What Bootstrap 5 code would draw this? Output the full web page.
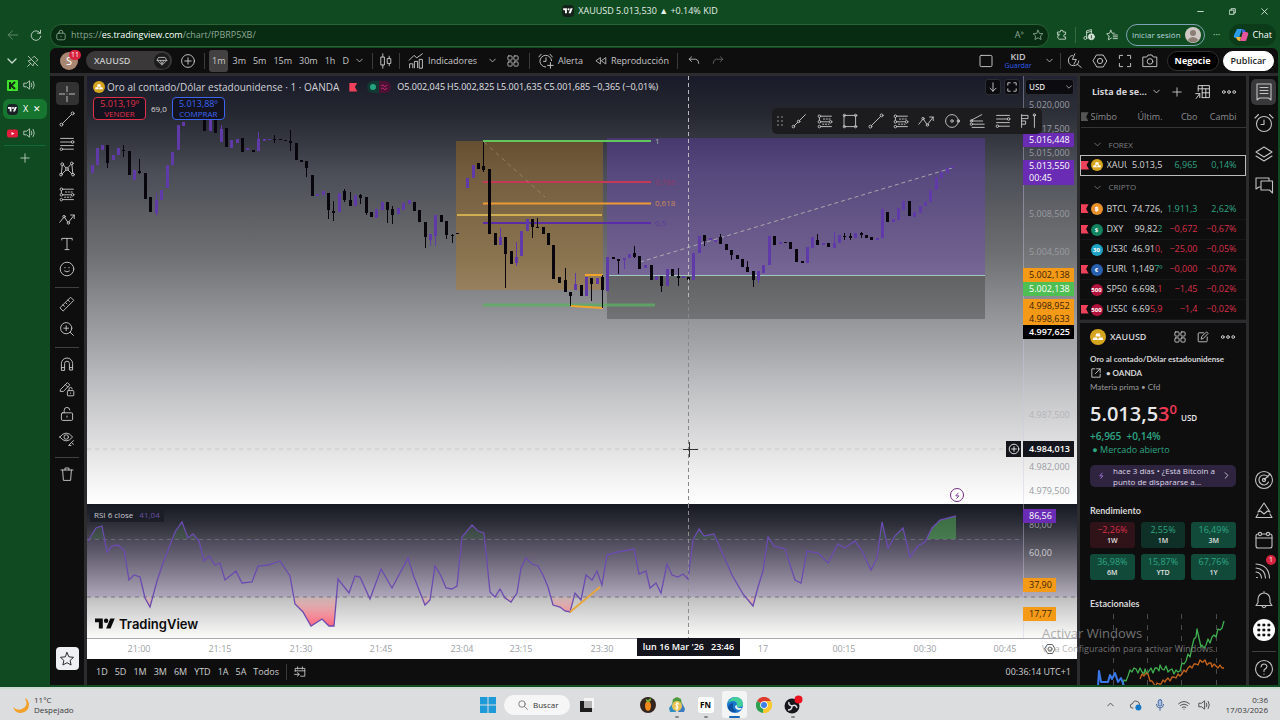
<!DOCTYPE html>
<html lang="es">
<head>
<meta charset="utf-8">
<meta name="viewport" content="width=device-width, initial-scale=1">
<title>XAUUSD 5.013,530 ▲ +0.14% KID</title>
<link href="https://cdn.jsdelivr.net/npm/bootstrap@5.3.0/dist/css/bootstrap.min.css" rel="stylesheet">
<style>
:root{--ui:"Open Sans","Noto Sans",sans-serif;--line:#2c2c2e;--up:#2ea583;--down:#d92f47}
body{font:400 9px/12px var(--ui);background:#0f4a20;color:#d6d6d6;height:100vh;min-height:560px;overflow:hidden}
button,input,select{font:inherit;color:inherit;background:none;border:0;padding:0}
a{color:inherit;text-decoration:none}
svg{display:block;flex:none}
.ic{width:16px;height:16px;fill:none;stroke:currentColor;stroke-width:1.2;stroke-linecap:round;stroke-linejoin:round}
.ic-s{width:12px;height:12px;stroke-width:1.4}
.ic-t{width:7px;height:7px;stroke-width:1.2}
.bt{display:flex;align-items:center;justify-content:center;flex:none}
.even{flex:1 1 0;min-width:0}
.w16{width:16px}.w20{width:20px}.w24{width:24px}.w26{width:26px}
/* browser */
.titlebar{height:22px;color:#e6efe8;flex:none}
.addrbar{height:26px;color:#d4e0d6;flex:none}
.address{height:23px;border:1px solid #2c6238;border-radius:12px;background:#072c12;color:#8fa895}
.signin{height:22px;border:1px solid #7fa3b4;border-radius:11px;padding:0 3px 0 5px;color:#b5d2df;font-size:8px}
.chatpill{height:22px;border-radius:11px;background:#0c3b1a;padding:0 4px;color:#fff;font-weight:500}
.tabs{width:50px;padding-top:1px;color:#c9d8cc;flex:none}
.tabrow{height:24px;padding:0 7px;gap:5px}
.tabrow.on{background:#16752f;border-radius:6px;height:20px;margin:2px 3px;padding:0 4px}
/* app */
.app{background:#2c2c2e;border-radius:6px 6px 0 0;overflow:hidden;gap:3px;margin-right:2px}
.dark{background:#0e0e0f}
.topbar{height:25px;flex:none;padding:0 4px 0 6px;font-weight:500;color:#c6c6c6}
.vr1{width:1px;height:16px;background:#3b3b3d;flex:none}
.avatar{width:18px;height:18px;border-radius:50%;background:#a98672;color:#fff;font-size:11px;position:relative}
.cnt{position:absolute;top:-2px;left:9px;background:#d8233f;color:#fff;border-radius:6px;font-size:7px;line-height:10px;padding:0 2px}
.symbox{width:86px;height:19px;border-radius:10px;background:#3a3838;padding:0 2px 0 8px}
.symbox input{width:52px;font-weight:600;outline:0}
.gem{width:16px;height:16px;border-radius:50%;background:#1b1b1b}
.tf{height:22px;border-radius:3px;padding:0 3px}
.tf.on{background:#434142}
.pillb{height:20px;border-radius:10px;padding:0 7px;font-weight:700;border:1px solid #303030;background:#000;color:#fff}
.pillb.lt{background:#fff;color:#222;border-color:#fff;font-weight:600}
.tools{width:34px;padding:6px 0 15px}
.tools .bt,.rail .bt{color:#c2c2c2}
.tools .bt{width:23px;height:23px;margin-bottom:2px;border-radius:4px}
.tools .bt.on{background:#323233}
.tools .bt.fav{background:#eef0f3;color:#222;margin:auto 0 0}
.hr1{width:24px;height:1px;background:#414143;margin:5px 0 4px;flex:none}
/* chart */
.pane{position:relative;overflow:hidden}
.pane svg.plot{position:absolute;inset:0;width:100%;height:100%}
.p-main{flex:428 1 0;background:linear-gradient(#191b2a 0,#24262f 8%,#373943 16%,#4c4e58 23%,#5c5e63 32%,#6f7072 42%,#8e8f93 54%,#a4a5a9 63%,#c2c3c5 74%,#dadadc 84%,#eee 92%,#fff)}
.p-rsi{flex:134 1 0;background:linear-gradient(#171922 0,#2d2f39 15%,#62606b 38%,#8d8994 55%,#b2adba 69%,#bfbfbf 70%,#dedede 85%,#fbfbf8)}
.lab{position:absolute;right:3px;width:51px;height:14px;margin-top:-7px;line-height:14px;padding-left:6px;white-space:nowrap;color:#9a9ca3}
.lab.s{width:33px;right:21px;font-weight:500}
.b-p{background:#6a2cb4;color:#fff;font-weight:500}.b-o{background:#f59a16;color:#39230a;font-weight:500}
.b-g{background:#4fbe53;color:#fff;font-weight:500}.b-k{background:#000;color:#fff;font-weight:600}
.b-c{background:#14151c;color:#fff;font-weight:600;height:16px;margin-top:-8px;line-height:16px}
.legend{position:absolute;left:6px;top:4px;font-size:9px;gap:2px;color:#e1e1e4;font-weight:500;white-space:nowrap}
.legend .nm{font-size:10px;font-weight:400;line-height:14px;color:#d0d1d6}
.quote{position:absolute;left:6px;top:21px;gap:5px;color:#ddd;font-size:8px}
.qb{width:53px;height:23px;border:1px solid;border-radius:4px;line-height:10px;background:#13131f;font-size:8px}
.qb b{font-size:9px;font-weight:500;display:block}
.axbtn{position:absolute;top:3px;right:57px;gap:3px}
.axbtn .bt,.cur{height:16px;background:#0c0c10;border:1px solid #2c2c33;border-radius:3px;color:#ddd}
.axbtn .bt{width:16px}
.cur{position:absolute;top:3px;right:3px;width:49px;appearance:none;padding:0 3px;font-size:8px;font-weight:600;line-height:14px}
.curchev{position:absolute;top:8px;right:5px;color:#ccc}
.favbar{position:absolute;left:69.2%;top:32px;width:270px;height:26px;background:#1c1c1f;border-radius:5px;color:#c2c2c2;z-index:3;padding:0 4px}
.fibt{position:absolute;line-height:12px;margin-top:-6px;font-size:8px}
.addp{position:absolute;right:56px;width:15px;height:16px;margin-top:-8px;background:#14151c;color:#fff}
.flash{position:absolute;width:14px;height:14px;margin:-7px;border:1px solid #6f2a80;border-radius:50%;background:#fff;color:#6f2a80}
.rsil{position:absolute;left:3px;top:3px;height:15px;padding:0 4px;background:#1c1e27;color:#c9c9d0;font-size:8px;line-height:16px}
.tvlogo{position:absolute;left:8px;bottom:5px;gap:4px;color:#0b0b0b;font:600 13px/18px Inter,var(--ui)}
.taxis{height:21px;flex:none;background:#fff;border-top:1px solid #a6a8b8;position:relative}
.tl{position:absolute;top:4px;width:40px;margin-left:-20px;text-align:center;color:#9d9fa6}
.tcur{position:absolute;top:-1px;left:55.55%;height:18px;line-height:18px;width:103px;text-align:center;background:#14151c;color:#fff;font-weight:600;white-space:pre}
.ranges{height:26px;flex:none;padding:0 6px 0 9px;gap:7px;color:#cfcfcf}
/* watch list */
.side{width:166px;font-size:9px}
.wl{width:100%;table-layout:fixed;border-collapse:collapse}
.wl th,.wl td{padding:0;height:20px;white-space:nowrap;overflow:hidden;text-align:right;font-weight:500;line-height:14px}
.wl thead th{color:#8b8b8d;font-weight:400;border-bottom:1px solid #353537}
.wl .sy{text-align:left}
.wl .grp th{height:24px;text-align:left;color:#7f7f81;font-size:8px;font-weight:400;padding-left:13px}
.wl .grp.g1 th{height:28px;padding-top:7px}
.wl tr.sel td{border-top:1px solid #bbb;border-bottom:1px solid #bbb}
.wl tr.sel td:first-child{border-left:1px solid #bbb}.wl tr.sel td:last-child{border-right:1px solid #bbb}
.wl tbody tr:not(.sel,.grp) td{border-bottom:1px solid #171719}
.up{color:var(--up)}.dn{color:var(--down)}
.coin{display:inline-block;width:12px;height:12px;border-radius:50%;font-size:6px;line-height:12px;text-align:center;color:#fff;font-weight:700;vertical-align:middle}
.flag{display:inline-block;width:8px;height:9px;background:#f0415a;clip-path:polygon(0 0,100% 0,70% 50%,100% 100%,0 100%);vertical-align:middle}
.det{padding:3px 10px 0}
.sub8{font:700 8px/14px Lato,var(--ui);white-space:nowrap}
.head9{font:700 9px/12px Lato,var(--ui);margin-top:18px}
.big{font-size:20px;line-height:22px;font-weight:600;color:#e8e8e8;white-space:nowrap;margin-top:9px}
.news{background:#2f2440;border-radius:5px;height:27px;color:#dcd6e6;font-size:8px;line-height:11px;text-align:left;padding:0 8px}
.tiles{display:grid;grid-template-columns:repeat(3,1fr);gap:6px;margin-top:5px}
.tile{height:26px;border-radius:3px;font-size:7px;line-height:11px;text-align:center;color:#e0e0e0;font-weight:600;padding-top:2px}
.tile b{display:block;font-size:9px;font-weight:500}
.t1{background:#301219}.t2{background:#0f3026}.t3{background:#124a3a}
.rail{width:29px;padding:3px 0 3px}
.rail .bt{width:25px;height:26px;margin-bottom:5px;border-radius:5px;position:relative}
.rail .ic{width:20px;height:20px;stroke-width:1.1}
.rail .btm{margin-bottom:4px}
.rail .btm:last-child{margin-bottom:0}
.rail .on{background:#39393b}
.rail .dots{width:22px;height:22px;border-radius:50%;background:#fff;color:#111}
.wm{position:absolute;left:calc(100% - 238px);bottom:64px;color:rgba(150,150,150,.75);z-index:5;white-space:nowrap;pointer-events:none;line-height:15px}
.wm div{font-size:13px}
/* taskbar */
.task{height:33px;flex:none;margin-top:2px;background:#dcdddf;color:#3b3b3b;border-top:2px solid #cdd8ce;font-size:8px;line-height:10px}
.task .bt{width:25px;height:27px;border-radius:3px;position:relative}
.task .bt.on{background:#f3f4f4}
.task .run::after{content:"";position:absolute;bottom:0;width:4px;height:2px;border-radius:1px;background:#888}
.task .on.run::after{width:11px;background:#1668b8}
.srch{width:66px;height:20px;border-radius:10px;background:#f6f6f6;padding:0 14px;gap:5px}
.srch input{width:34px;outline:0}
.srch input::placeholder{color:#333;opacity:1}
</style>
</head>
<body class="d-flex flex-column position-relative">
<svg width="0" height="0" class="position-absolute"><defs>
<symbol id="chev" viewBox="0 0 10 10"><path d="M1 3l4 4 4-4"/></symbol>
<symbol id="plus" viewBox="0 0 20 20"><path d="M10 3v14M3 10h14"/></symbol>
<symbol id="pluso" viewBox="0 0 20 20"><circle cx="10" cy="10" r="8"/><path d="M10 6v8M6 10h8"/></symbol>
<symbol id="spk" viewBox="0 0 20 20"><path d="M2 7h4l5-4v14l-5-4H2zM14 7q2 3 0 6M17 4q4 6 0 12"/></symbol>
<symbol id="grid4" viewBox="0 0 20 20"><rect x="1.500" y="1.500" width="7" height="7" rx="1.500"/><rect x="11.500" y="1.500" width="7" height="7" rx="1.500"/><rect x="1.500" y="11.500" width="7" height="7" rx="1.500"/><rect x="11.500" y="11.500" width="7" height="7" rx="1.500"/></symbol>
<symbol id="cross" viewBox="0 0 20 20"><path d="M10 0v7M10 13v7M0 10h7M13 10h7M10 10h0"/></symbol>
<symbol id="trend" viewBox="0 0 20 20"><circle cx="3" cy="17" r="1.8"/><circle cx="17" cy="3" r="1.8"/><path d="M4.400 15.600L15.600 4.400"/></symbol>
<symbol id="trend3" viewBox="0 0 20 20"><circle cx="3" cy="17" r="1.6"/><circle cx="9.500" cy="10.500" r="1.600"/><path d="M4 16l4.500-4.500M10.600 9.400L18 2"/></symbol>
<symbol id="fib" viewBox="0 0 20 20"><path d="M2 3h16M2 7.500h13M2 12h16M5 16.500h13"/><circle cx="17" cy="7.500" r="1.600"/><circle cx="3" cy="16.500" r="1.600"/></symbol>
<symbol id="patt" viewBox="0 0 20 20"><circle cx="4" cy="4" r="1.700"/><circle cx="16" cy="3" r="1.700"/><circle cx="2.500" cy="17" r="1.700"/><circle cx="10" cy="10" r="1.700"/><circle cx="17.500" cy="17" r="1.700"/><path d="M4 6L3 15M5.500 5l3 3.500M14.500 4.500L11 8.500M16.200 5l1 10M4 16l4.500-4.500M11.500 11.500L16 16"/></symbol>
<symbol id="proj" viewBox="0 0 20 20"><path d="M5 4h13M5 11h10M5 17h13M3 6v3" /><path d="M8 7.500h10M7 14h8" stroke-dasharray="1.500 2"/><circle cx="3" cy="4" r="1.600"/><circle cx="3" cy="11" r="1.600"/><circle cx="17" cy="11" r="1.600"/><circle cx="3" cy="17" r="1.600"/></symbol>
<symbol id="wave" viewBox="0 0 20 20"><path d="M1 14l4.500-5.500M7 8l4 6M12.500 13.500L19 5M14.500 5H19v4.500"/><circle cx="6.300" cy="7" r="1.500"/><circle cx="11.700" cy="15" r="1.500"/></symbol>
<symbol id="txt" viewBox="0 0 20 20"><path d="M3.500 5V3h13v2M10 3v14M7.500 17h5"/></symbol>
<symbol id="smile" viewBox="0 0 20 20"><circle cx="10" cy="10" r="8.500"/><path d="M7.500 8v.5M12.500 8v.5M7 12.500q3 2.500 6 0"/></symbol>
<symbol id="ruler" viewBox="0 0 20 20"><path d="M1.500 14.500l13-13 4 4-13 13zM5 11l2 2M8 8l2 2M11 5l2 2"/></symbol>
<symbol id="zoomi" viewBox="0 0 20 20"><circle cx="9" cy="9" r="7"/><path d="M14 14l4 4M9 6v6M6 9h6"/></symbol>
<symbol id="magnet" viewBox="0 0 20 20"><path d="M3 17.500V9.500a7 7 0 0114 0v8h-4V9.500a3 3 0 00-6 0v8zM3 14.500h4M13 14.500h4"/></symbol>
<symbol id="penlock" viewBox="0 0 20 20"><path d="M2 10.500L10.500 2l3 3L5.500 13H2zM8 4.500l3 3"/><rect x="10.500" y="12" width="8" height="6.500" rx="1"/><path d="M12.500 12v-2a2 2 0 014 0M14.500 15v.5"/></symbol>
<symbol id="lock" viewBox="0 0 20 20"><rect x="3" y="8.500" width="14" height="9.500" rx="1.500"/><path d="M6.500 8.500V5.500a3.500 3.500 0 017-.5M10 12.500v1.500"/></symbol>
<symbol id="eye" viewBox="0 0 20 20"><path d="M1 7.500q8-10 16 0-8 10-16 0z"/><circle cx="9" cy="7.500" r="2.800"/><path d="M12 18l6-6M13 18h2M16.500 15.500l1.500 1"/></symbol>
<symbol id="trash" viewBox="0 0 20 20"><path d="M2.500 5h15M4.500 5l1 13h9l1-13M7.500 5V2.500h5V5"/></symbol>
<symbol id="star" viewBox="0 0 20 20"><path d="M10 2l2.400 5.300 5.800.6-4.300 3.900 1.200 5.700L10 14.600 4.900 17.500l1.200-5.700L1.800 7.900l5.800-.6z"/></symbol>
<symbol id="candle" viewBox="0 0 20 20"><path d="M6 1v4M6 15v4M14 4v3M14 13v3"/><rect x="4" y="5" width="4" height="10"/><rect x="12" y="7" width="4" height="6"/></symbol>
<symbol id="indic" viewBox="0 0 20 20"><path d="M1.500 9l6-6 3.500 3 7-5M2 18.500v-5h4v5M8 18.500v-8h4v8M14 18.500V8h4v10.500z"/></symbol>
<symbol id="alarm" viewBox="0 0 20 20"><circle cx="10" cy="11" r="7.500"/><path d="M10 7v4.500H7M1 5l3.500-3.500M19 5l-3.500-3.500"/></symbol>
<symbol id="alarmp" viewBox="0 0 20 20"><path d="M17 9.500A7.300 7.300 0 109.500 17.500M10 6v4.500H7M1 5l3-3.500M18 5l-3-3.500M15.500 12v7M12 15.500h7"/></symbol>
<symbol id="rew" viewBox="0 0 20 20"><path d="M9 5v10l-7-5zM18 5v10l-7-5z"/></symbol>
<symbol id="undo" viewBox="0 0 20 20"><path d="M6 3L2 7l4 4M2 7h11q5 1 5 7"/></symbol>
<symbol id="redo" viewBox="0 0 20 20"><path d="M14 3l4 4-4 4M18 7H7q-5 1-5 7"/></symbol>
<symbol id="sq" viewBox="0 0 20 20"><rect x="2.500" y="3" width="15" height="14" rx="1.500"/></symbol>
<symbol id="quick" viewBox="0 0 20 20"><path d="M8 3a6.500 6.500 0 108 7M14 14l5 4M11 1L8 8h5l-3 6"/></symbol>
<symbol id="hex" viewBox="0 0 20 20"><path d="M6 2.500h8L18.500 10 14 17.500H6L1.500 10z"/><circle cx="10" cy="10" r="3.300"/></symbol>
<symbol id="full" viewBox="0 0 20 20"><path d="M3 7V3h4M13 3h4v4M17 13v4h-4M7 17H3v-4"/></symbol>
<symbol id="cam" viewBox="0 0 20 20"><path d="M1.500 5h4.500l1.500-2.500h5L14 5h4.500v12h-17z"/><circle cx="10" cy="10.500" r="3.500"/></symbol>
<symbol id="dots3" viewBox="0 0 20 20"><circle cx="3.500" cy="10" r="1.700"/><circle cx="10" cy="10" r="1.700"/><circle cx="16.500" cy="10" r="1.700"/></symbol>
<symbol id="tbl" viewBox="0 0 20 20"><path d="M4 9V2h14v15H9M4 6h14M9 2v15M13.500 6v11M9 11h9M1 12h5v5M6 12l-4.500 6"/></symbol>
<symbol id="list" viewBox="0 0 20 20"><path d="M3 2h14v16l-2.500-2H5.500L3 18zM6 5.500h8M6 8.500h8M6 11.500h8"/></symbol>
<symbol id="layers" viewBox="0 0 20 20"><path d="M2 8l8-5 8 5-8 5zM2 12l8 5 8-5"/></symbol>
<symbol id="chat" viewBox="0 0 20 20"><path d="M2 14V3h13v3M2 14l3-2h2M7 6h11.500v12l-3-3H7z"/></symbol>
<symbol id="target" viewBox="0 0 20 20"><circle cx="10" cy="10" r="8.500"/><path d="M14 7a5 5 0 10.500 5M10 10l5.500-5.500"/><circle cx="10" cy="10" r="1.600"/></symbol>
<symbol id="mount" viewBox="0 0 20 20"><path d="M10 3l6 9-2.500-1L10 14l-3.500-3L4 12zM4 14l-2 3.500h16L16 14"/></symbol>
<symbol id="cal" viewBox="0 0 20 20"><rect x="2" y="4" width="16" height="14" rx="2"/><path d="M2 8h16"/><circle cx="6" cy="4" r="1.600" fill="#0e0e0f"/><circle cx="14" cy="4" r="1.600" fill="#0e0e0f"/></symbol>
<symbol id="rss" viewBox="0 0 20 20"><path d="M2 4q13 1 13.500 14M2 8q9 1 9.500 10M2 12q5 .5 5.500 6M2.500 17.500h1"/></symbol>
<symbol id="bell" viewBox="0 0 20 20"><path d="M2 15.500h16l-2-3V9A6 6 0 004 9v3.500zM8 16q2 3.500 4 0M10 1.500V3"/></symbol>
<symbol id="help" viewBox="0 0 20 20"><circle cx="10" cy="10" r="8.500"/><path d="M7 8q.5-3 3-3t3 2.500q0 1.500-3 3.500v1.500M10 15v.3"/></symbol>
<symbol id="apps9" viewBox="0 0 20 20"><path d="M4 4h2v2H4zM9 4h2v2H9zM14 4h2v2h-2zM4 9h2v2H4zM9 9h2v2H9zM14 9h2v2h-2zM4 14h2v2H4zM9 14h2v2H9zM14 14h2v2h-2z" fill="currentColor" stroke-width=".6"/></symbol>
<symbol id="recta" viewBox="0 0 20 20"><rect x="3" y="3" width="14" height="14"/><circle cx="3" cy="3" r="1.500"/><circle cx="17" cy="3" r="1.500"/><circle cx="3" cy="17" r="1.500"/><circle cx="17" cy="17" r="1.500"/></symbol>
<symbol id="circ" viewBox="0 0 20 20"><circle cx="10" cy="10" r="8"/><circle cx="10" cy="10" r="1.600"/><circle cx="18" cy="10" r="1.600"/></symbol>
<symbol id="fan" viewBox="0 0 20 20"><path d="M3 9L16 2M3 10h14M5 14h14M4 18h15"/><circle cx="3" cy="10" r="1.500"/><circle cx="3" cy="14" r="1.500"/></symbol>
<symbol id="vprof" viewBox="0 0 20 20"><path d="M2 2v16M2 3h8v4H2M2 10h5v4H2M18 3v15"/><circle cx="18" cy="2.500" r="1.500"/></symbol>
<symbol id="edit" viewBox="0 0 20 20"><path d="M11 3H3.500Q2 3 2 4.500v12Q2 18 3.500 18h12q1.500 0 1.500-1.500V10M7 13l1-4 8-7.500 2.500 2.500L11 12z"/></symbol>
<symbol id="ext" viewBox="0 0 20 20"><path d="M8 3H3v14h14v-5M11 3h6v6M17 3l-8 8"/></symbol>
<symbol id="calgo" viewBox="0 0 20 20"><path d="M2 9V4h16v13h-7M2 8h16M6 1.500V5M14 1.500V5M1 14h7M5.500 11L9 14l-3.500 3"/></symbol>
<symbol id="bolt" viewBox="0 0 20 20"><path d="M12 3L5 11h9l-6 7" stroke-width="2.500"/></symbol>
<symbol id="tv" viewBox="0 0 36 28"><path fill="currentColor" stroke="none" d="M14 22H7V11H0V4h14zM28 22h-8l7.500-18h8z"/><circle cx="20" cy="8" r="4" fill="currentColor" stroke="none"/></symbol>
<symbol id="gold" viewBox="0 0 18 18"><circle cx="9" cy="9" r="9" fill="#d6a520" stroke="none"/><path fill="#fff" stroke="none" d="M7 5h4l1 3.500H6zM4 9.500h4l1 3H3zM10 9.500h4l1 3H9z"/></symbol>
</defs></svg>

<header class="titlebar d-flex align-items-center px-2">
  <div class="even"></div>
  <div class="d-flex align-items-center gap-1">
    <svg class="rounded-1" width="12" height="12" viewBox="-4 -5 44 38" style="background:#15211b;color:#fff"><use href="#tv" width="36" height="28"/></svg><span>XAUUSD 5.013,530 ▲ +0.14% KID</span>
  </div>
  <div class="even d-flex justify-content-end gap-3">
    <button class="bt w16" aria-label="Minimizar"><svg class="ic ic-t" viewBox="0 0 10 10"><path d="M1 5h8"/></svg></button>
    <button class="bt w16" aria-label="Restaurar"><svg class="ic ic-t" viewBox="0 0 10 10"><path d="M3 3V1h6v6H7M1 3h6v6H1z"/></svg></button>
    <button class="bt w16" aria-label="Cerrar"><svg class="ic ic-t" viewBox="0 0 10 10"><path d="M1 1l8 8M9 1L1 9"/></svg></button>
  </div>
</header>

<div class="addrbar d-flex align-items-center pe-1">
  <button class="bt w26" aria-label="Atrás"><svg class="ic ic-s" viewBox="0 0 20 20" opacity=".5"><path d="M18 10H2M9 3l-7 7 7 7"/></svg></button>
  <button class="bt w20" aria-label="Actualizar"><svg class="ic ic-s" viewBox="0 0 20 20"><path d="M17 7a8 8 0 10 1 5M17.500 2v5h-5"/></svg></button>
  <form class="address d-flex align-items-center flex-fill ms-1 px-1 gap-1">
    <svg class="ic ic-s" viewBox="0 0 20 20"><rect x="3" y="7" width="14" height="11" rx="3"/><path d="M7 7V5a3 3 0 016 0v2M10 12v1"/></svg>
    <span class="flex-fill">https://<span class="text-white">es.tradingview.com</span>/chart/fPBRP5XB/</span>
    <span class="me-1">A<sup>»</sup></span><svg class="ic ic-s"><use href="#star"/></svg>
  </form>
  <button class="bt w26" aria-label="Extensiones"><svg class="ic ic-s" viewBox="0 0 20 20"><path d="M3 5h4q0-4 3-3t2 3h4v4q-4 0-3 3t3 1v4H5l-2-2v-4q3 0 3-2T3 9z"/></svg></button>
  <i class="vr1" style="background:#35683f"></i>
  <button class="bt w26" aria-label="Multimedia"><svg class="ic ic-s" viewBox="0 0 20 20"><path d="M6 15V3l8-2v6M6 6l8-2"/><circle cx="4" cy="15" r="2.500"/><circle cx="14" cy="13" r="5" fill="currentColor"/><path d="M14 11v4" stroke="#0f4a20"/></svg></button>
  <button class="bt w20" aria-label="Favoritos"><svg class="ic ic-s" viewBox="0 0 20 20"><path d="M8 2l2 5h4M5 12l-4-4 5-1 2-5M5 12l-1 6 5-3M12 10h7M12 13h7M12 16h7"/></svg></button>
  <button class="signin d-flex align-items-center gap-1 ms-1 text-nowrap">Iniciar sesión
    <svg width="16" height="16" viewBox="0 0 16 16"><circle cx="8" cy="8" r="8" fill="#cfc8c4"/><circle cx="8" cy="6" r="3" fill="#8c7d77"/><path d="M2.500 13q5.500-6 11 0-5.500 5-11 0z" fill="#8c7d77"/></svg></button>
  <button class="bt w24" aria-label="Más">···</button>
  <button class="chatpill d-flex align-items-center gap-1">
    <svg width="16" height="16" viewBox="0 0 16 16"><path d="M4 2h5L6 11H3Q0 11 1 8z" fill="#2c9be8"/><path d="M9 2l3 1 1 3H9z" fill="#3a62e0"/><path d="M10 5h3q3 0 2 3l-2 6H7z" fill="#e5559b"/><path d="M3 10h5l-1 4q-3 0-4-4z" fill="#f5b73a"/></svg>Chat</button>
</div>

<div class="d-flex flex-fill" style="min-height:0">
  <nav class="tabs" aria-label="Pestañas">
    <div class="tabrow d-flex align-items-center justify-content-between"><svg class="ic ic-s" style="width:10px"><use href="#chev"/></svg><svg class="ic ic-s me-1" viewBox="0 0 20 20"><path d="M2 2l16 16M7 8l-5 2 8 8 2-5M9 5l3-3 6 6-3 3M6 14l-5 5"/></svg></div>
    <a href="#" class="tabrow d-flex align-items-center"><svg width="11" height="11" viewBox="0 0 11 11"><rect width="11" height="11" rx="1" fill="#41e22c"/><path d="M3 2v7M8 2L4 5.500 8 9" stroke="#0c2b0c" stroke-width="2" fill="none"/></svg><svg class="ic ic-s"><use href="#spk"/></svg></a>
    <a href="#" class="tabrow on d-flex align-items-center text-white"><svg class="rounded-1" width="11" height="11" viewBox="-4 -5 44 38" style="background:#1a2026"><use href="#tv" width="36" height="28"/></svg><span>X</span><span>✕</span></a>
    <a href="#" class="tabrow d-flex align-items-center"><svg width="11" height="11" viewBox="0 0 11 11"><rect y="1.500" width="11" height="8" rx="2" fill="#e01b3c"/><path d="M4.500 4v3l3-1.500z" fill="#fff"/></svg><svg class="ic ic-s"><use href="#spk"/></svg></a>
    <div class="border-bottom border-success mx-1 opacity-50"></div>
    <button class="tabrow bt mx-auto" aria-label="Nueva pestaña"><svg class="ic ic-s"><use href="#plus"/></svg></button>
  </nav>

  <main class="app d-flex flex-column flex-fill" style="min-width:0">
    <div class="topbar dark d-flex align-items-center">
      <button class="avatar bt ms-1">S<span class="cnt">11</span></button>
      <label class="symbox d-flex align-items-center justify-content-between ms-2 me-1"><input value="XAUUSD" aria-label="Símbolo"><span class="gem bt"><svg class="ic ic-s" viewBox="0 0 20 20"><path d="M5 4h10l3 5-8 8-8-8zM2 9h16M7 9l3 6 3-6"/></svg></span></label>
      <button class="bt w24" aria-label="Comparar"><svg class="ic"><use href="#pluso"/></svg></button>
      <i class="vr1 ms-1 me-1"></i>
      <div class="d-flex align-items-center" style="gap:1px" id="tfs"></div>
      <button class="bt w16" aria-label="Intervalos"><svg class="ic ic-t"><use href="#chev"/></svg></button>
      <i class="vr1 ms-1"></i><button class="bt w26" aria-label="Velas"><svg class="ic"><use href="#candle"/></svg></button><i class="vr1"></i>
      <button class="bt gap-1 ms-2"><svg class="ic"><use href="#indic"/></svg>Indicadores</button>
      <button class="bt w24 ms-1" aria-label="Favoritos"><svg class="ic ic-t"><use href="#chev"/></svg></button>
      <button class="bt w16" aria-label="Plantillas"><svg class="ic ic-s"><use href="#grid4"/></svg></button>
      <i class="vr1 mx-2"></i>
      <button class="bt gap-1 me-1"><svg class="ic"><use href="#alarmp"/></svg>Alerta</button>
      <button class="bt gap-1 ms-2"><svg class="ic ic-s"><use href="#rew"/></svg>Reproducción</button>
      <i class="vr1 ms-2 me-2"></i>
      <button class="bt w16" aria-label="Deshacer"><svg class="ic ic-s"><use href="#undo"/></svg></button>
      <button class="bt w16 ms-2 opacity-50" aria-label="Rehacer"><svg class="ic ic-s"><use href="#redo"/></svg></button>
      <div class="flex-fill"></div>
      <button class="bt w20 me-2" aria-label="Diseño"><svg class="ic"><use href="#sq"/></svg></button>
      <div class="bt flex-column" style="line-height:9px"><button class="fw-semibold">KID</button><a href="#" style="color:#2e5bea;font-size:7px">Guardar</a></div>
      <button class="bt w20 ms-2" aria-label="Diseños"><svg class="ic ic-t"><use href="#chev"/></svg></button>
      <i class="vr1"></i>
      <button class="bt w26" aria-label="Búsqueda rápida"><svg class="ic"><use href="#quick"/></svg></button>
      <button class="bt w26" aria-label="Configuración"><svg class="ic"><use href="#hex"/></svg></button>
      <button class="bt w24" aria-label="Pantalla completa"><svg class="ic"><use href="#full"/></svg></button>
      <button class="bt w26" aria-label="Captura"><svg class="ic"><use href="#cam"/></svg></button>
      <button class="pillb mx-1">Negocie</button><button class="pillb lt">Publicar</button>
    </div>

    <div class="d-flex flex-fill" style="gap:3px;min-height:0">
      <nav class="tools dark d-flex flex-column align-items-center" id="tools" aria-label="Dibujo"></nav>

      <section class="d-flex flex-column flex-fill position-relative" style="min-width:0">
        <div class="pane p-main" id="main">
          <svg class="plot" id="mainplot" viewBox="87 76 990 428" preserveAspectRatio="none"></svg>
          <div class="legend d-flex align-items-center">
            <svg width="12" height="12"><use href="#gold"/></svg>
            <span class="nm">Oro al contado/Dólar estadounidense · 1 · OANDA</span>
            <i class="flag mx-2"></i>
            <svg class="me-1" width="24" height="12" viewBox="0 0 24 12"><path d="M6 0h6v12H6A6 6 0 016 0z" fill="#123832"/><path d="M12 0h6a6 6 0 010 12h-6z" fill="#4b1234"/><circle cx="6" cy="6" r="3" fill="#25a582"/><path d="M14 5q2-2 3 0t3-1M14 8q2-2 3 0t3-1" stroke="#c22a74" fill="none"/></svg>
            <span>O5.002,045</span><span>H5.002,825</span><span>L5.001,635</span><span>C5.001,685</span><span>−0,365 (−0,01%)</span>
          </div>
          <div class="quote d-flex align-items-center">
            <button class="qb" style="color:#e0304a"><b>5.013,19⁰</b>VENDER</button><span>69,0</span>
            <button class="qb" style="color:#3c66f0"><b>5.013,88⁰</b>COMPRAR</button>
          </div>
          <div class="favbar d-flex align-items-center justify-content-between" id="favbar"></div>
        </div>
        <div class="pane p-rsi" id="rsi">
          <svg class="plot" id="rsiplot" viewBox="87 504 990 134" preserveAspectRatio="none"></svg>
          <div class="rsil">RSI 6 close <span class="ms-1" style="color:#6a50a8">41,04</span></div>
          <div class="tvlogo d-flex align-items-center"><svg width="20" height="16"><use href="#tv"/></svg>TradingView</div>
        </div>
        <div class="taxis" id="taxis"><div class="tcur">lun 16 Mar '26   23:46</div>
          <svg class="ic ic-s position-absolute" style="right:21px;top:4px;color:#444"><use href="#hex"/></svg></div>
        <div class="ranges dark d-flex align-items-center">
          <button>1D</button><button>5D</button><button>1M</button><button>3M</button><button>6M</button><button>YTD</button><button>1A</button><button>5A</button><button>Todos</button>
          <i class="vr1"></i><button class="bt" aria-label="Ir a fecha"><svg class="ic ic-s"><use href="#calgo"/></svg></button>
          <span class="ms-auto">00:36:14 UTC+1</span>
        </div>
      </section>

      <aside class="side d-flex flex-column overflow-hidden" style="gap:3px">
        <div class="dark">
          <div class="d-flex align-items-center ps-2 pe-1" style="height:31px">
            <button class="fw-bold ms-1 text-nowrap">Lista de se...</button>
            <svg class="ic ic-t ms-auto"><use href="#chev"/></svg>
            <button class="bt w26 ms-1" aria-label="Añadir"><svg class="ic ic-s"><use href="#plus"/></svg></button>
            <button class="bt w26" aria-label="Vista"><svg class="ic"><use href="#tbl"/></svg></button>
            <button class="bt w26" aria-label="Más"><svg class="ic"><use href="#dots3"/></svg></button>
          </div>
          <table class="wl"><colgroup><col style="width:10px"><col style="width:16px"><col style="width:20px"><col style="width:36px"><col style="width:35px"><col><col style="width:9px"></colgroup>
            <thead><tr><th><i class="flag d-block" style="background:#555"></i></th><th colspan="2" class="sy">Símbo</th><th>Últim.</th><th>Cbo</th><th>Cambi</th><th></th></tr></thead>
            <tbody id="wl"></tbody></table>
        </div>
        <div class="det dark flex-fill overflow-hidden d-flex flex-column" style="min-height:0">
          <div class="d-flex align-items-center flex-shrink-0" style="height:22px">
            <svg width="16" height="16"><use href="#gold"/></svg><b class="fw-semibold ms-1">XAUUSD</b>
            <button class="bt ms-auto" aria-label="Mosaico"><svg class="ic ic-s"><use href="#grid4"/></svg></button>
            <button class="bt w26 mx-1" aria-label="Nota"><svg class="ic ic-s"><use href="#edit"/></svg></button>
            <button class="bt w16" aria-label="Más"><svg class="ic"><use href="#dots3"/></svg></button>
          </div>
          <div class="sub8 mt-1">Oro al contado/Dólar estadounidense</div>
          <div class="sub8 d-flex align-items-center"><svg class="ic ic-s me-1"><use href="#ext"/></svg>•&nbsp;OANDA</div>
          <div class="sub8 fw-normal" style="color:#9a9a9c">Materia prima • Cfd</div>
          <div class="big">5.013,5<span style="color:#f23a55">3<sup style="font-size:13px">0</sup></span><span class="ms-1 fw-semibold" style="font-size:8px">USD</span></div>
          <div class="up fw-semibold" style="font-size:10px;line-height:14px">+6,965 &nbsp;+0,14%</div>
          <div class="up" style="line-height:14px">&nbsp;● Mercado abierto</div>
          <button class="news d-flex align-items-center gap-2 mt-2 flex-none"><svg class="ic ic-t" style="color:#a77be0"><use href="#bolt"/></svg><span class="flex-fill text-nowrap">hace 3 días • ¿Está Bitcoin a<br>punto de dispararse a...</span><svg class="ic ic-t" viewBox="0 0 10 10"><path d="M3 1l4 4-4 4"/></svg></button>
          <div class="head9">Rendimiento</div>
          <div class="tiles">
            <div class="tile t1"><b class="dn">−2,26%</b>1W</div><div class="tile t2"><b class="up">2,55%</b>1M</div><div class="tile t3"><b class="up">16,49%</b>3M</div>
            <div class="tile t3"><b class="up">36,98%</b>6M</div><div class="tile t3"><b class="up">15,87%</b>YTD</div><div class="tile t3"><b class="up">67,76%</b>1Y</div>
          </div>
          <div class="head9">Estacionales</div>
          <svg class="mt-1" id="season" width="146" height="72" viewBox="1090 616 146 72"></svg>
        </div>
      </aside>

      <nav class="rail dark d-flex flex-column align-items-center" id="rail" aria-label="Paneles"></nav>
    </div>
  </main>
</div>

<footer class="task d-flex align-items-center px-2">
  <div class="even d-flex align-items-center gap-1 ps-1">
    <svg width="18" height="18" viewBox="0 0 18 18"><path d="M13 2q4 8-3 11-5 2-9-2 2 6 8 6 8-1 8-9-1-5-4-6z" fill="#f2a12b"/></svg>
    <div>11°C<br>Despejado</div>
  </div>
  <div class="d-flex align-items-center" style="gap:4px">
    <button class="bt" aria-label="Inicio"><svg width="16" height="16" viewBox="0 0 16 16"><path fill="#1e9ad8" d="M0 0h7.500v7.500H0zM8.500 0H16v7.500H8.500zM0 8.500h7.500V16H0zM8.500 8.500H16V16H8.500z"/></svg></button>
    <label class="srch d-flex align-items-center"><svg class="ic" style="width:10px;height:10px" viewBox="0 0 20 20" stroke-width="2"><circle cx="8" cy="8" r="6.500"/><path d="M13 13l6 6"/></svg><input placeholder="Buscar" aria-label="Buscar"></label>
    <button class="bt me-4" aria-label="Vista de tareas"><svg width="16" height="16" viewBox="0 0 16 16"><path d="M5 1h10v10H5z" fill="#f6f6f6"/><path d="M1 4h4v7h8v4H1z" fill="#1c1c1c"/><path d="M5 4h8v7H5z" fill="#b4b4b4"/></svg></button>
    <button class="bt ms-2" aria-label="FL Studio"><svg width="16" height="16" viewBox="0 0 16 16"><circle cx="8" cy="8" r="8" fill="#34261f"/><ellipse cx="8" cy="9" rx="3" ry="5" fill="#f08a1c"/><path d="M8 5q-3-1-2-3l2 1 3-2q1 3-3 4z" fill="#6fb43a"/></svg></button>
    <button class="bt run" aria-label="MetaTrader"><svg width="16" height="16" viewBox="0 0 16 16"><path d="M8 0l4 2 1 6H3l1-6z" fill="#4e9a3d"/><path d="M1 15L0 11l4-5 3 9z" fill="#2f8fc0"/><path d="M9 15l4-9 3 6-1 3z" fill="#3a7bc2"/><circle cx="8" cy="9" r="5" fill="#e9c456"/><path d="M10 7q-4-1-3 1l2 2q0 2-3 1M8 5v8" stroke="#fff" fill="none"/></svg></button>
    <button class="bt run" aria-label="FundingNext"><span class="bt bg-white fw-bold text-black" style="width:16px;height:16px;font-size:8px">FN</span></button>
    <button class="bt on run" aria-label="Edge"><svg width="16" height="16" viewBox="0 0 16 16"><circle cx="8" cy="8" r="8" fill="#1b78cf"/><path d="M1 6q2-6 8-6 7 1 7 7 0 3-4 3-3 0-2-2 0-4-4-4-3 0-5 2z" fill="#43cf9b"/><path d="M6 8q-1 5 4 6-6 3-9-3 0-4 5-5z" fill="#0f4f9f"/><path d="M10 8q-1 3 3 3l2 0-2 2q-5 0-5-4z" fill="#e8f2f5"/></svg></button>
    <button class="bt" aria-label="Chrome"><svg width="16" height="16" viewBox="0 0 16 16"><path d="M8 8L1 4a8 8 0 0114 0z" fill="#df3b2f"/><path d="M8 8L1 4a8 8 0 006 12z" fill="#2ea04f"/><path d="M8 8h7.900L15 4H8zM8 8l-1 8a8 8 0 008-12z" fill="#f8c82d"/><circle cx="8" cy="8" r="3.800" fill="#fff"/><circle cx="8" cy="8" r="3" fill="#3f7fe8"/></svg></button>
    <button class="bt run" aria-label="OBS"><svg width="20" height="20" viewBox="0 0 20 20"><circle cx="9" cy="11" r="7.500" fill="#17171b"/><path d="M9 11q-4-1-3-4M9 11q4-2 5 2M9 11q0 4-4 4" stroke="#ddd" fill="none" stroke-width="1.500"/><circle cx="15.500" cy="4.500" r="4" fill="#ea1420"/></svg></button>
  </div>
  <div class="even d-flex align-items-center justify-content-end gap-2 pe-1">
    <svg class="ic ic-t me-2" viewBox="0 0 10 10"><path d="M1 7l4-4 4 4"/></svg>
    <svg class="ic ic-s" viewBox="0 0 20 20"><path d="M5 15H4a3 3 0 010-7q2-6 8-4 4 1 4 5"/><circle cx="14" cy="14" r="5" fill="#1478c8" stroke="none"/></svg>
    <svg class="ic ic-s mx-1" viewBox="0 0 20 20"><rect x="7" y="1" width="6" height="11" rx="3" fill="#a8bfe0" stroke="#345a9a"/><path d="M4 9q0 6 6 6t6-6M10 15v4" stroke="#345a9a"/></svg>
    <svg class="ic ic-s" viewBox="0 0 20 20"><path d="M1 8q9-8 18 0M4 11q6-5 12 0M7 14q3-2.500 6 0M10 17h0"/></svg>
    <svg class="ic ic-s me-1"><use href="#spk"/></svg>
    <div class="text-end ms-1">0:36<br>17/03/2026</div>
  </div>
</footer>
<div class="wm"><div>Activar Windows</div>Ve a Configuración para activar Windows.</div>

<script>
const $=id=>document.getElementById(id);
const btn=(i,c='')=>`<button class="bt ${c}" aria-label="${i}"><svg class="ic"><use href="#${i}"/></svg></button>`;
$('tfs').innerHTML=['1m','3m','5m','15m','30m','1h','D'].map((t,i)=>`<button class="tf ${i?'':'on'}">${t}</button>`).join('');
$('tools').innerHTML=btn('cross','on')+['trend','fib','patt','proj','wave','txt','smile','-','ruler','zoomi','-','magnet','penlock','lock','eye','-','trash'].map(i=>i==='-'?'<i class="hr1"></i>':btn(i)).join('')+btn('star','fav');
$('favbar').innerHTML='<svg width="8" height="12" viewBox="0 0 8 12" fill="#555"><path d="M1 1h2v2H1zM5 1h2v2H5zM1 5h2v2H1zM5 5h2v2H5zM1 9h2v2H1zM5 9h2v2H5z"/></svg>'+['trend3','proj','recta','trend','proj','wave','circ','fan','fib','vprof'].map(i=>btn(i,'w20')).join('');
$('rail').innerHTML=btn('list','on')+btn('alarm')+btn('layers')+btn('chat')+'<span class="mt-auto"></span>'+['target','mount','cal','rss','bell'].map(i=>btn(i,'btm')).join('')+'<button class="bt btm" aria-label="Aplicaciones"><span class="dots bt mb-0"><svg class="ic"><use href="#apps9"/></svg></span></button><i class="hr1 mt-1"></i>'+btn('help','btm');
$('rail').querySelectorAll('.btm')[3].insertAdjacentHTML('beforeend','<span class="cnt" style="left:15px;padding:0 3px">1</span>');

/* candles: x, body top, body bottom, colour, wick top, wick bottom */
const C=`92 165 173 p;97 148 165 p;102 145 150 p;107 145 163 k 145 168;113 155 160 p;118 148 155 p;123 150 151 k 145 157;129 151 175 k;134 170 180 p;139 171 173 k 159 174;145 173 199 k;150 197 212 k;156 200 213 p 193 216;161 190 200 p;167 165 188 p;172 152 165 p;178 125 150 p;183 122 126 p;204 118 131 k;210 120 131 p;215 120 133 k;221 129 142 p 125 142;226 128 147 k;231 140 148 p;237 139 143 p;242 138 152 k;247 148 150 p;253 150 152 k;258 139 151 p 132 151;264 139 141 p;269 139 140 p;274 139 140 k 135 143;280 139 140 k;285 140 141 k;290 141 143 k 130 151;296 143 160 k;301 160 162 k;306 161 168 k 161 177;312 175 196 k;317 194 196 p;323 191 195 p;328 193 210 k 193 219;333 211 213 k 201 221;339 193 212 p;344 191 200 k 189 202;350 200 206 k 192 206;355 195 206 p;360 195 198 k 194 204;366 197 213 k 197 215;371 212 217 k;376 209 218 p;382 202 210 p;387 202 210 k 202 223;392 209 215 k 206 224;398 208 214 p;403 203 210 p;409 200 204 p;414 202 211 k;419 210 222 k;425 222 237 k 222 248;430 234 240 p 234 246;435 215 236 p 215 246;441 215 222 k;446 221 235 k 221 239;452 235 236 k 234 243;457 233 234 k;467 178 188 p;473 165 178 p;478 163 169 k;483 166 170 k 141 172;489 169 234 k;495 233 245 k;500 237 245 p 228 245;505 237 254 k 237 288;511 251 264 k;516 257 263 p 242 266;521 231 256 p;527 219 231 p;532 219 227 k 219 238;537 227 228 k 218 228;543 227 234 k;548 233 245 k;553 245 279 k;559 277 283 k;565 280 292 k 268 292;570 292 296 k 292 306;575 284 290 p 273 290;581 285 296 k;586 277 296 p;591 278 284 k 278 301;597 278 284 p;602 277 290 k 275 308;607 257 291 p;613 257 259 k;618 259 261 k 259 274;624 258 260 p 258 269;629 254 258 p;634 253 257 k 246 258;639 256 269 k;645 265 268 p;651 265 280 k;656 276 280 p;661 276 286 k 276 292;667 269 286 p;672 269 276 k;678 276 278 k 268 286;683 276 278 p;688 277 280 k;693 253 280 p;699 236 253 p;704 235 241 k 235 246;710 238 240 p;715 240 242 p;720 237 244 k 234 244;726 244 250 k;731 250 255 k 250 260;737 255 259 k;742 259 267 k;747 267 272 k 261 272;753 271 280 k 271 287;758 271 280 p 271 283;763 265 273 p;769 236 265 p;774 236 245 k;780 242 244 p;785 242 243 k;790 242 249 k;796 249 262 k;802 261 263 k;807 247 263 p;812 237 248 p;817 240 245 k 234 245;823 243 245 p;828 243 247 k;834 243 248 p 232 248;839 235 243 p;844 236 237 k 233 240;850 236 238 k 233 240;855 233 238 p;861 233 235 k 232 238;866 235 238 k;871 237 240 k;877 238 240 p;882 209 238 p;887 212 222 k;893 219 222 p;898 208 220 p;903 201 210 p;909 201 216 k;914 212 217 p;920 206 213 p;925 202 206 p;930 190 202 p;936 177 190 p;941 172 178 p;947 168 173 p;952 166 168 p`;
const col={p:'#5f3aa8',k:'#08060c'};
const candles=C.split(';').map(r=>{const[x,a,b,c,w,v]=r.split(' ');
  return (w?`<path d="M${x} ${w}V${v}" stroke="${col[c]}" stroke-width="1" transform="translate(.5 0)"/>`:'')+`<rect x="${x-1}" y="${a}" width="3" height="${b-a}" fill="${col[c]}"/>`}).join('');
const L=(x1,y1,x2,y2,c,w=2,o='')=>`<path d="M${x1} ${y1}L${x2} ${y2}" stroke="${c}" stroke-width="${w}" fill="none" ${o}/>`;
$('mainplot').innerHTML=
 `<rect x="456" y="141" width="147" height="149" fill="#b97a14" fill-opacity=".36"/>
  <rect x="607" y="138" width="378" height="137" fill="#7040cc" fill-opacity=".33"/>
  <rect x="607" y="275" width="378" height="44" fill="#3c3c3c" fill-opacity=".4"/>
  <rect x="1023" y="76" width="54" height="428" fill="#fff" fill-opacity=".04"/>`
 +L(483,182,651,182,'#c43a56')+L(483,203.5,651,203.5,'#ee9a35')+L(457,215,602,215,'#d0ad50')+L(483,223,651,223,'#5b2ca8')
 +L(483,305,655,305,'#5cae62',3,'opacity=".8"')+L(607,275.5,985,275.5,'#a3c8bd',1)+L(585,275,603,275,'#f2a52a')+L(571,306,603,308,'#f2a52a')
 +L(484,142,545,197,'#cdb99a',1,'stroke-dasharray="4 4" opacity=".4"')+L(640,262,952,168,'#bfc3b8',1,'stroke-dasharray="4 3" opacity=".75"')
 +candles+L(483,141,651,141,'#62c55e')
 +L(87,449,1006,449,'#c8c8ca',1,'stroke-dasharray="4 4"')+L(688.5,76,688.5,300,'#b9b9bd',1,'stroke-dasharray="4 3"')
 +L(688.5,300,688.5,504,'#88888c',1,'stroke-dasharray="4 3"')+L(689.5,442,689.5,457,'#333',1)+L(683,449.500,698,449.500,'#333',1)+L(1023.5,76,1023.5,504,'#c9c6e6',1,'opacity=".4"');
const py=y=>((y-76)/428*100).toFixed(2)+'%', px=x=>((x-87)/990*100).toFixed(2)+'%', ry=y=>((y-504)/134*100).toFixed(2)+'%';
const lab=(t,y,c='',f=py,s='')=>`<div class="lab ${c}" style="top:${f(y)};${s}">${t}</div>`;
$('main').insertAdjacentHTML('beforeend',
 lab('5.020,000',105)+lab('5.017,500',129)+lab('5.016,448',140,'b-p')+lab('5.015,000',153)
 +`<div class="lab b-p" style="top:${py(167)};height:25px;line-height:12px">5.013,550<br>00:45</div>`
 +lab('5.008,500',214)+lab('5.004,500',252)+lab('5.002,138',275,'b-o')+lab('5.002,138',289,'b-g')+lab('4.998,952',306,'b-o')+lab('4.998,633',319,'b-o')+lab('4.997,625',332,'b-k')
 +lab('4.987,500',415,'',py,'color:#b4b4b8')+lab('4.984,013',449,'b-c')+lab('4.982,000',467)+lab('4.979,500',491)
 +`<button class="addp bt" style="top:${py(449)}" aria-label="Añadir"><svg class="ic ic-s"><use href="#pluso"/></svg></button>`
 +`<span class="flash bt" style="left:${px(957)};top:${py(495)}"><svg class="ic ic-t"><use href="#bolt"/></svg></span>`
 +[['1',141,'#a5b5a0'],['0,786',182,'#8d3a68'],['0,618',203,'#c98a5a'],['0,5',223,'#5b3a98']].map(([t,y,c])=>`<span class="fibt" style="left:${px(655)};top:${py(y)};color:${c}">${t}</span>`).join('')
 +'<div class="axbtn d-flex"><button class="bt" aria-label="Bajar"><svg class="ic ic-s" viewBox="0 0 20 20"><path d="M10 3v14M5 12l5 5 5-5"/></svg></button><button class="bt" aria-label="Ajustar"><svg class="ic ic-s"><use href="#full"/></svg></button></div><select class="cur" aria-label="Moneda"><option>USD</option></select><svg class="ic curchev" style="width:6px;height:6px"><use href="#chev"/></svg>');

const R='88,541 96,528 102,526 107,552 112,546 118,545 124,550 129,580 134,575 140,577 145,598 150,607 157,581 163,563 170,545 175,532 182,522 188,538 193,534 199,541 204,561 209,556 215,565 220,563 225,580 236,571 242,583 252,582 258,566 268,565 280,561 290,576 295,604 303,612 311,626 322,619 329,626 334,626 338,579 349,593 355,576 360,577 370,599 381,569 392,588 408,558 414,577 425,605 430,600 435,566 441,576 446,588 452,589 457,586 462,537 472,525 478,531 484,533 490,592 495,597 500,589 505,598 511,602 517,593 521,568 526,558 532,564 538,566 543,575 548,587 553,605 560,607 565,611 570,612 575,593 581,600 586,575 592,580 597,571 602,585 607,555 618,552 634,549 639,574 646,571 650,588 656,583 661,593 667,564 672,575 678,577 683,574 688,579 693,540 699,529 704,536 714,534 721,550 732,575 743,594 753,606 758,587 763,571 768,537 774,546 785,549 795,580 801,583 807,551 818,553 828,563 838,544 845,548 855,541 863,553 871,570 877,558 882,522 888,548 895,536 903,528 910,557 918,546 925,542 932,528 940,520 956,516';
$('rsiplot').innerHTML=`<defs><clipPath id="lo"><rect x="87" y="597" width="990" height="41"/></clipPath><clipPath id="hi"><rect x="87" y="504" width="990" height="35"/></clipPath>
 <linearGradient id="lg" gradientUnits="userSpaceOnUse" x1="0" y1="597" x2="0" y2="628"><stop stop-color="#f77" stop-opacity=".15"/><stop offset="1" stop-color="#ff5a78"/></linearGradient></defs>
 <rect x="87" y="539" width="936" height="58" fill="#7e57c2" fill-opacity=".07"/>
 <polygon points="88,597 ${R} 956,597" fill="url(#lg)" clip-path="url(#lo)"/>
 <polygon points="88,539 ${R} 956,539" fill="#4caf50" fill-opacity=".14" clip-path="url(#hi)"/>
 <polygon points="926,539 932,528 940,520 956,516 956,539" fill="#4a9a50" fill-opacity=".55"/>`
 +L(87,539.5,1023,539.5,'#85818f',1,'stroke-dasharray="4 4" opacity=".6"')+L(87,597,1077,597,'#77777b',1,'stroke-dasharray="4 4"')
 +`<polyline points="${R}" fill="none" stroke="#6b4bb0" stroke-width="1.300"/>`+L(570,612,600,587,'#e8a73c',2)
 +L(688.5,504,688.5,638,'#8d8d92',1,'stroke-dasharray="4 3"')+L(1023.5,504,1023.5,638,'#c9c6e6',1,'opacity=".4"');
$('rsi').insertAdjacentHTML('beforeend',lab('80,00',525,'s',ry)+lab('86,56',516,'s b-p',ry)+lab('60,00',553,'s',ry,'color:#d0d0d4')+lab('37,90',585,'s b-o',ry)+lab('17,77',614,'s b-o',ry));
$('taxis').insertAdjacentHTML('afterbegin',[['21:00',139],['21:15',220],['21:30',301],['21:45',381],['23:04',462],['23:15',521],['23:30',602],['17',763],['00:15',844],['00:30',925],['00:45',1005]].map(([t,x])=>`<span class="tl" style="left:${px(x)}">${t}</span>`).join(''));

const row=(fl,ic,bg,s,l,c,p,d,sel)=>`<tr class="${sel||''}"><td>${fl?'<i class="flag d-block"></i>':''}</td><td class="sy">${ic==='g'?'<svg width="12" height="12"><use href="#gold"/></svg>':`<span class="coin" style="background:${bg}">${ic}</span>`}</td><td class="sy">${s}</td><td>${l}</td><td class="${d}">${c}</td><td class="${d}">${p}</td><td></td></tr>`;
const grp=(t,c='')=>`<tr class="grp ${c}"><th colspan="7"><div class="d-flex align-items-center gap-2"><svg class="ic ic-t"><use href="#chev"/></svg>${t}</div></th></tr>`;
$('wl').innerHTML=grp('FOREX','g1')+row(1,'g','','XAUU','5.013,5','6,965','0,14%','up','sel')+grp('CRIPTO')
 +row(1,'฿','#e8912a','BTCU','74.726,','1.911,3','2,62%','up')
 +row(1,'$','#12835f','DXY','99,82<span class="up">2</span>','−0,672','−0,67%','dn')
 +row(0,'30','#1fa3c4','US30','46.91<span class="dn">0,</span>','−25,00','−0,05%','dn')
 +row(1,'€','#285fae','EURU','1,149<span class="up">7⁰</span>','−0,000','−0,07%','dn')
 +row(0,'500','#b3123c','SP50','6.698,<span class="dn">1</span>','−1,45','−0,02%','dn')
 +row(1,'500','#b3123c','US50','6.69<span class="dn">5,9</span>','−1,4','−0,02%','dn');

/* seasonal curves: anchor points with a small deterministic ripple between them */
const rip=(pts,a)=>{let o=[],k=0;for(let i=0;i<pts.length-1;i++){const[p,q]=[pts[i],pts[i+1]];for(let x=p[0];x<q[0];x+=2){k++;o.push(x+','+Math.round(p[1]+(q[1]-p[1])*(x-p[0])/(q[0]-p[0])+Math.sin(k*2.3)*a))}}return o.join(' ')};
const pl=(p,c,w=1.3)=>`<polyline points="${p}" fill="none" stroke="${c}" stroke-width="${w}" stroke-linejoin="round"/>`;
$('season').innerHTML=[1113,1147,1181,1216].map(x=>L(x+.5,616,x+.5,688,'#4a4a4c',1,'stroke-dasharray="5 6"')).join('')
 +pl(rip([[1122,688],[1132,671],[1145,674],[1160,670],[1178,674],[1190,656],[1197,633],[1202,650],[1212,640],[1218,634],[1226,623]],3),'#3fae4f')
 +pl(rip([[1140,680],[1146,675],[1155,688],[1166,682],[1180,677],[1190,669],[1203,663],[1212,667],[1226,670]],2),'#c8651c')
 +pl('1098,688 1099,673 1101,684 1108,684 1110,677 1112,681 1115,675 1118,684 1121,680 1124,688','#3b78e8',2);
</script>
<script src="https://cdn.jsdelivr.net/npm/bootstrap@5.3.0/dist/js/bootstrap.bundle.min.js"></script>
</body>
</html>
